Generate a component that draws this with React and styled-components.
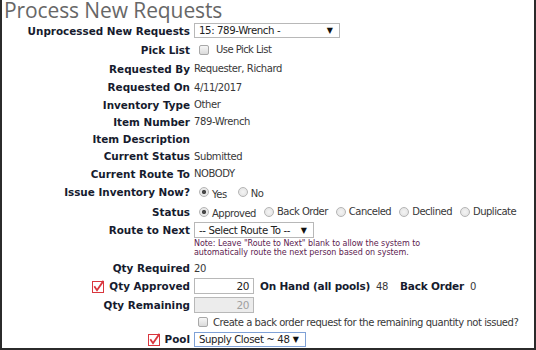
import React from "react";
import styled, { createGlobalStyle } from "styled-components";

const Global = createGlobalStyle`
  html, body { margin: 0; padding: 0; background: #fff; overflow: hidden; }
  #root { width: 536px; height: 350px; }
`;

const Frame = styled.div`
  box-sizing: border-box;
  width: 536px;
  height: 350px;
  border-left: 2px solid #2b2b2b;
  border-right: 2px solid #2b2b2b;
  border-bottom: 2px solid #2b2b2b;
  background: #fff;
  overflow: hidden;
`;

const Title = styled.h1`
  margin: 0;
  padding: 0 0 0 2px;
  height: 21px;
  line-height: 21px;
  font-family: "Open Sans", "DejaVu Sans", sans-serif;
  font-weight: normal;
  font-size: 21px;
  letter-spacing: -0.1px;
  color: #676767;
`;

const Form = styled.div`
  display: grid;
  grid-template-columns: 188px minmax(0, 1fr);
  column-gap: 4px;
`;

const Label = styled.div`
  height: ${(p) => p.$h}px;
  align-self: ${(p) => (p.$top ? "start" : "auto")};
  display: flex;
  align-items: center;
  justify-content: flex-end;
  gap: 5px;
  font-family: "DejaVu Sans", Verdana, sans-serif;
  font-weight: bold;
  font-size: 10.4px;
  color: #161b2e;
  white-space: nowrap;
`;

const Value = styled.div`
  min-width: 0;
  min-height: ${(p) => p.$h}px;
  display: flex;
  align-items: center;
  font-family: "DejaVu Sans", Tahoma, sans-serif;
  font-size: 10px;
  letter-spacing: -0.4px;
  color: #383838;
  white-space: nowrap;
`;

const Stack = styled.div`
  display: flex;
  flex-direction: column;
  min-width: 0;
`;

const Select = styled.div`
  box-sizing: border-box;
  width: ${(p) => p.$w}px;
  height: ${(p) => p.$hh || 15}px;
  border: 1px solid ${(p) => (p.$focus ? "#7fa1d6" : "#b8b8b8")};
  background: #fff;
  display: flex;
  align-items: center;
  justify-content: space-between;
  padding: 0 6px 0 4px;
  font-family: "DejaVu Sans", Tahoma, sans-serif;
  font-size: 10.2px;
  letter-spacing: -0.4px;
  color: #222;
`;

const Arrow = styled.span`
  font-size: 8px;
  letter-spacing: 0;
  color: #111;
`;

const Box = styled.span`
  box-sizing: border-box;
  width: 10px;
  height: 10px;
  border: 1px solid #a8a8a8;
  border-radius: 2px;
  background: linear-gradient(#f6f6f6, #dadada);
  margin-left: ${(p) => p.$ml || 0}px;
  margin-right: ${(p) => p.$mr || 0}px;
  flex: none;
`;

const Radio = styled.span`
  box-sizing: border-box;
  width: 10px;
  height: 10px;
  border: 1px solid #b4b4b4;
  border-radius: 50%;
  background: ${(p) =>
    p.$on
      ? "radial-gradient(circle, #4a4a4a 0 1.8px, #e8e8e8 2.4px)"
      : "radial-gradient(circle, #f4f4f4 0, #e0e0e0 100%)"};
  margin-left: ${(p) => p.$ml || 0}px;
  flex: none;
`;

const RadioText = styled.span`
  margin-left: 3px;
  margin-right: ${(p) => p.$mr ?? 8}px;
  position: relative;
  top: ${(p) => p.$low || 0}px;
  font-size: 10px;
  letter-spacing: -0.5px;
`;

const Note = styled.div`
  font-family: "DejaVu Sans", Verdana, sans-serif;
  font-size: 8px;
  letter-spacing: -0.05px;
  line-height: 9px;
  color: #5c1b4f;
  padding-bottom: 2px;
  white-space: nowrap;
`;

const Input = styled.div`
  box-sizing: border-box;
  width: 60px;
  height: 16px;
  border: 1px solid #b8b8b8;
  background: ${(p) => (p.$disabled ? "#ececec" : "#fff")};
  color: ${(p) => (p.$disabled ? "#a0a0a0" : "#222")};
  text-align: right;
  padding-right: 4px;
  font-family: "DejaVu Sans", Tahoma, sans-serif;
  font-size: 10.5px;
  line-height: 14px;
  flex: none;
`;

const Bold = styled.span`
  font-family: "DejaVu Sans", Verdana, sans-serif;
  font-weight: bold;
  font-size: 10.5px;
  letter-spacing: -0.2px;
  color: #161b2e;
  margin-left: ${(p) => p.$ml || 0}px;
`;

const Num = styled.span`
  margin-left: ${(p) => p.$ml || 0}px;
`;

const Text = styled.span`
  font-size: ${(p) => p.$fs || 10}px;
  letter-spacing: ${(p) => p.$ls ?? -0.4}px;
`;

const Req = () => (
  <svg width="12" height="13" viewBox="0 0 12 13">
    <rect x="0.5" y="1.5" width="11" height="11" fill="#fff" stroke="#d9363e" strokeWidth="1" />
    <path d="M2.3 6.3 L5 10.2 L11.5 0.8" fill="none" stroke="#d9363e" strokeWidth="1.8" />
  </svg>
);

export default function App() {
  return (
    <>
      <Global />
      <Frame>
        <Title>Process New Requests</Title>
        <Form>
          <Label $h={19}>Unprocessed New Requests</Label>
          <Value $h={19}>
            <Select $w={146}>
              <span>15: 789-Wrench -</span>
              <Arrow>▼</Arrow>
            </Select>
          </Value>

          <Label $h={19}>Pick List</Label>
          <Value $h={19}>
            <Box $ml={5} $mr={7} />
            <Text $ls={-0.55}>Use Pick List</Text>
          </Value>

          <Label $h={19}>Requested By</Label>
          <Value $h={19}>Requester, Richard</Value>

          <Label $h={18}>Requested On</Label>
          <Value $h={18}>4/11/2017</Value>

          <Label $h={17}>Inventory Type</Label>
          <Value $h={17}>Other</Value>

          <Label $h={17}>Item Number</Label>
          <Value $h={17}>789-Wrench</Value>

          <Label $h={17}>Item Description</Label>
          <Value $h={17}></Value>

          <Label $h={18}>Current Status</Label>
          <Value $h={18}>Submitted</Value>

          <Label $h={17}>Current Route To</Label>
          <Value $h={17}>NOBODY</Value>

          <Label $h={20}>Issue Inventory Now?</Label>
          <Value $h={20}>
            <Radio $on $ml={5} />
            <RadioText $low={2} $mr={11}>Yes</RadioText>
            <Radio />
            <RadioText $low={1}>No</RadioText>
          </Value>

          <Label $h={19}>Status</Label>
          <Value $h={19}>
            <Radio $on $ml={5} />
            <RadioText $low={2}>Approved</RadioText>
            <Radio />
            <RadioText>Back Order</RadioText>
            <Radio />
            <RadioText>Canceled</RadioText>
            <Radio />
            <RadioText>Declined</RadioText>
            <Radio />
            <RadioText $mr={0}>Duplicate</RadioText>
          </Value>

          <Label $h={18} $top>Route to Next</Label>
          <Stack>
            <Value $h={18}>
              <Select $w={120} $hh={16}>
                <span>-- Select Route To --</span>
                <Arrow>▼</Arrow>
              </Select>
            </Value>
            <Note>
              Note: Leave "Route to Next" blank to allow the system to
              <br />
              automatically route the next person based on system.
            </Note>
          </Stack>

          <Label $h={18}>Qty Required</Label>
          <Value $h={18}>20</Value>

          <Label $h={18}>
            <Req />
            Qty Approved
          </Label>
          <Value $h={18}>
            <Input>20</Input>
            <Bold $ml={6}>On Hand (all pools)</Bold>
            <Num $ml={6}>48</Num>
            <Bold $ml={12}>Back Order</Bold>
            <Num $ml={6}>0</Num>
          </Value>

          <Label $h={19}>Qty Remaining</Label>
          <Value $h={19}>
            <Input $disabled>20</Input>
          </Value>

          <Label $h={16}></Label>
          <Value $h={16}>
            <Box $ml={4} $mr={5} />
            <Text $fs={10} $ls={-0.46}>Create a back order request for the remaining quantity not issued?</Text>
          </Value>

          <Label $h={18}>
            <Req />
            Pool
          </Label>
          <Value $h={18}>
            <Select $w={112} $focus>
              <span>Supply Closet ~ 48</span>
              <Arrow>▼</Arrow>
            </Select>
          </Value>
        </Form>
      </Frame>
    </>
  );
}
